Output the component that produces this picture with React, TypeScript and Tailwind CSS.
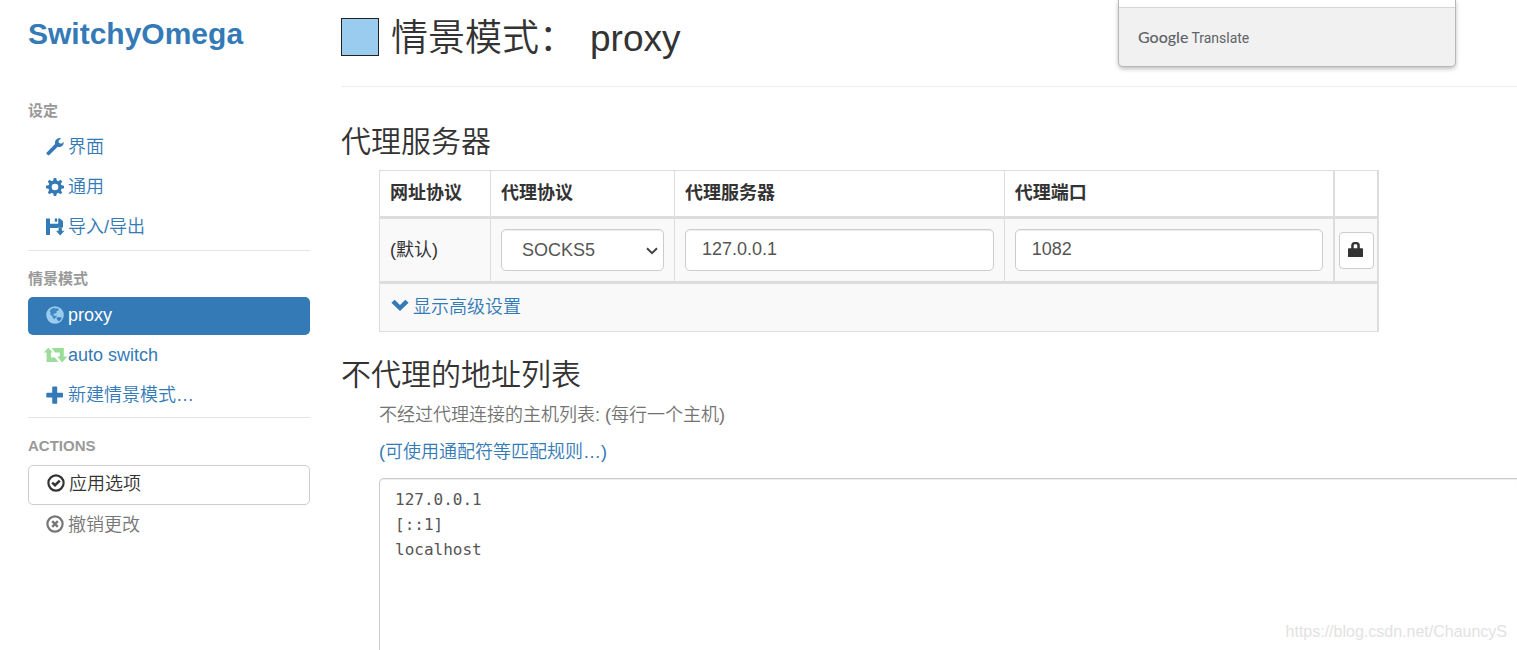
import * as React from "react"
import { cx } from "class-variance-authority"

type IconProps = { className?: string }

function WrenchIcon({ className }: IconProps) {
  return (
    <svg viewBox="0 0 18 18" className={className} fill="currentColor" aria-hidden="true">
      <path d="M15.200.6q-1.700-.9-3.700-.1Q8.900 1.700 8.900 4.700l.2 1.400L.7 14.400q-.7.800 0 1.600l1 1.100q.8.800 1.600 0l8.400-8.300q1.700.6 3.600-.3Q17.900 7.200 17.900 4.100l-2.700 1.700-2.400-1-.2-2.300z" />
    </svg>
  )
}

function CogIcon({ className }: IconProps) {
  return (
    <svg viewBox="0 0 18 18" className={className} aria-hidden="true">
      <circle cx="9" cy="9" r="5" fill="none" stroke="currentColor" strokeWidth="3.4" />
      {[0, 45, 90, 135].map((angle) => (
        <path
          key={angle}
          d="M7.800 0h2.400l.8 3.400H7zM7 14.600h4L10.200 18H7.800z"
          fill="currentColor"
          transform={`rotate(${angle} 9 9)`}
        />
      ))}
    </svg>
  )
}

function FloppyIcon({ className }: IconProps) {
  return (
    <svg viewBox="0 0 18 18" className={className} fill="currentColor" aria-hidden="true">
      <path d="M0 .5h4v5.300h8.200V.5H14l3 2.800v6.200h-5.200V10H4v7H0zM8.800.5h2.400v3.300H8.800z" />
      <path d="M12.600 9.200h3.200v3.600h2.600L14.200 17.600 10 12.800h2.600z" />
    </svg>
  )
}

function GlobeIcon({ className }: IconProps) {
  return (
    <svg viewBox="0 0 18 18" className={className} aria-hidden="true">
      <circle cx="9" cy="9" r="8.8" fill="#99ccee" />
      <path
        d="M5.200 3 8 1.800l1.400.8 1.800-.4 1.600 1-.6 1.600-1.700.1.3 1.500-1.300 1.200-1.800.2-.2 1.400 1.400.7 1.600-.1.300 1.200-1.600.7L8.400 13.300l-1.500-1.200-.6-2.100-2-1.500.2-2.200-.9-1z"
        fill="#337ab7"
        fillOpacity=".85"
      />
      <path d="M10.200 12.200l1.900-1 3.700.3c-.6 1.900-1.700 3.200-3.200 3.900l-1-1.700z" fill="#337ab7" />
    </svg>
  )
}

function RetweetIcon({ className }: IconProps) {
  return (
    <svg viewBox="0 0 18 18" className={className} fill="currentColor" aria-hidden="true">
      <path d="M2.200 1.800 6.800 6.600H4.900v5H9l3.200 4.400H.6V6.600h-2.700z" />
      <path d="M5.800 2h12v8.600h3.700L16 16.400l-4.700-5.800h2.500V6.400H9z" />
    </svg>
  )
}

function PlusIcon({ className }: IconProps) {
  return (
    <svg viewBox="0 0 18 18" className={className} fill="currentColor" aria-hidden="true">
      <path d="M7 .5h3.400q.8 0 .8.8v5.500h5q.8 0 .8.8v3.200q0 .8-.8.8h-5V17q0 .8-.8.8H7q-.8 0-.8-.8v-5.400H1.100q-.8 0-.8-.8V7.600q0-.8.8-.8h5.100V1.300q0-.8.8-.8z" />
    </svg>
  )
}

function OkCircleIcon({ className }: IconProps) {
  return (
    <svg viewBox="0 0 18 18" className={className} fill="none" stroke="currentColor" aria-hidden="true">
      <circle cx="9" cy="9" r="7.600" strokeWidth="2.200" />
      <path d="M5.200 8.600l2.800 2.600 4.800-4.600" strokeWidth="2.600" />
    </svg>
  )
}

function RemoveCircleIcon({ className }: IconProps) {
  return (
    <svg viewBox="0 0 18 18" className={className} fill="none" stroke="currentColor" aria-hidden="true">
      <circle cx="9" cy="9" r="7.600" strokeWidth="2.200" />
      <path d="M6.200 6.200l5.600 5.600M11.800 6.200l-5.600 5.600" strokeWidth="2.400" />
    </svg>
  )
}

function ChevronIcon({ className }: IconProps) {
  return (
    <svg viewBox="0 0 18 18" className={className} fill="currentColor" aria-hidden="true">
      <path d="M.4 5.800 3.600 2.700 9 8l5.400-5.300 3.200 3.100L9 14z" />
    </svg>
  )
}

function LockIcon({ className }: IconProps) {
  return (
    <svg viewBox="0 0 18 18" className={className} fill="currentColor" aria-hidden="true">
      <path d="M1.800 7.200h2.400V4.500Q4.200 1 7.700 1h1.600q3.500 0 3.500 3.500v2.700h2.400q.8 0 .8.8v7.400q0 .6-.8.6H1.800q-.8 0-.8-.6V8q0-.8.800-.8zM6.700 7.200h3.600V4.600Q10.300 3.300 9 3.300H8Q6.700 3.300 6.700 4.600z" />
    </svg>
  )
}

type NavItem = {
  name: string
  href: string
  icon: React.ComponentType<IconProps>
  iconClass?: string
  active?: boolean
}

const settings: NavItem[] = [
  { name: "界面", href: "#/ui", icon: WrenchIcon },
  { name: "通用", href: "#/general", icon: CogIcon },
  { name: "导入/导出", href: "#/io", icon: FloppyIcon },
]

const profiles: NavItem[] = [
  { name: "proxy", href: "#/profile/proxy", icon: GlobeIcon, active: true },
  {
    name: "auto switch",
    href: "#/profile/auto",
    icon: RetweetIcon,
    iconClass: "text-[#99dd99]",
  },
  { name: "新建情景模式…", href: "#/new", icon: PlusIcon },
]

function NavHeading({ children }: { children: React.ReactNode }) {
  return (
    <h2 className="text-[15px] leading-[22px] font-bold text-[#999999] uppercase">
      {children}
    </h2>
  )
}

function NavList({ items }: { items: NavItem[] }) {
  return (
    <ul className="mt-[7px] flex flex-col gap-[2px]">
      {items.map((item) => (
        <li key={item.name}>
          <a
            href={item.href}
            className={cx(
              "flex h-[38px] items-center gap-1 rounded-[5px] px-[18px] pb-[2px]",
              item.active ? "bg-[#337ab7] text-white" : "text-[#337ab7]",
            )}
          >
            <item.icon className={cx("size-[18px] shrink-0 overflow-visible", item.iconClass)} />
            {item.name}
          </a>
        </li>
      ))}
    </ul>
  )
}

function Sidebar() {
  return (
    <header className="w-[310px] shrink-0 pt-3 pl-7">
      <h1 className="text-[30px] leading-[44px] font-bold">
        <a href="#/about" className="text-[#337ab7]">
          SwitchyOmega
        </a>
      </h1>
      <nav className="mt-11 font-[350]">
        <NavHeading>设定</NavHeading>
        <NavList items={settings} />
        <hr className="mt-[3px] mb-[17px] border-[#e5e5e5]" />
        <NavHeading>情景模式</NavHeading>
        <NavList items={profiles} />
        <hr className="mt-[2px] mb-[17px] border-[#e5e5e5]" />
        <NavHeading>Actions</NavHeading>
        <div className="mt-2 flex flex-col gap-[1px]">
          <button
            type="button"
            className="flex h-10 items-center gap-1 rounded-[5px] border border-[#cccccc] bg-white px-[18px] pb-[2px] text-[#333333]"
          >
            <OkCircleIcon className="mb-[2px] size-[18px] shrink-0" />
            应用选项
          </button>
          <button
            type="button"
            className="flex h-[38px] items-center gap-1 px-[18px] text-[#777777]"
          >
            <RemoveCircleIcon className="mb-[2px] size-[18px] shrink-0" />
            撤销更改
          </button>
        </div>
      </nav>
    </header>
  )
}

const field =
  "block h-[42px] w-full rounded-[5px] border border-[#cccccc] bg-white text-[#555555] shadow-[inset_0_1px_1px_rgba(0,0,0,0.075)] outline-none"
const cell = "border border-[#dddddd] px-[10px] text-left"

function ServerTable() {
  return (
    <table className="w-full max-w-[1000px] table-fixed border-collapse">
      <colgroup>
        <col className="w-[111px]" />
        <col className="w-[184px]" />
        <col />
        <col />
        <col className="w-11" />
      </colgroup>
      <thead>
        <tr className="h-[47px] font-bold">
          <th className={cell}>网址协议</th>
          <th className={cell}>代理协议</th>
          <th className={cell}>代理服务器</th>
          <th className={cell}>代理端口</th>
          <td className="border border-x-2 border-[#dddddd]" />
        </tr>
      </thead>
      <tbody className="border-y-[3px] border-[#dddddd] bg-[#f9f9f9]">
        <tr className="h-[65px]">
          <td className={cell}>(默认)</td>
          <td className={cell}>
            <div className="relative">
              <select
                aria-label="代理协议"
                defaultValue="SOCKS5"
                className={cx(field, "appearance-none pl-5")}
              >
                <option>HTTP</option>
                <option>HTTPS</option>
                <option>SOCKS4</option>
                <option>SOCKS5</option>
              </select>
              <svg
                viewBox="0 0 12 8"
                className="pointer-events-none absolute top-[18px] right-[6px] h-2 w-3"
                fill="none"
                stroke="#444444"
                strokeWidth="2"
                aria-hidden="true"
              >
                <path d="M1 1.200l5 5 5-5" />
              </svg>
            </div>
          </td>
          <td className={cell}>
            <input
              type="text"
              aria-label="代理服务器"
              defaultValue="127.0.0.1"
              className={cx(field, "px-4 pb-[2px]")}
            />
          </td>
          <td className={cell}>
            <input
              type="text"
              aria-label="代理端口"
              defaultValue="1082"
              className={cx(field, "px-4 pb-[2px]")}
            />
          </td>
          <td className="border-x-2 border-[#dddddd]">
            <button
              type="button"
              aria-label="代理登录"
              className="mx-auto flex h-[37px] w-[35px] items-center justify-center rounded-[4px] border border-[#cccccc] bg-white text-[#333333]"
            >
              <LockIcon className="size-[18px]" />
            </button>
          </td>
        </tr>
      </tbody>
      <tbody className="bg-[#f9f9f9]">
        <tr className="h-[49px]">
          <td colSpan={5} className="border border-r-2 border-[#dddddd] px-[11px]">
            <a href="#advanced" className="flex items-center gap-1 font-[350] text-[#337ab7]">
              <ChevronIcon className="mb-1 size-[18px]" />
              显示高级设置
            </a>
          </td>
        </tr>
      </tbody>
    </table>
  )
}

function TranslatePopup() {
  return (
    <aside className="absolute top-0 right-[61px] w-[338px] rounded-b-[5px] border border-t-0 border-[#b8b8b8] bg-[#f1f1f1] text-[#5f6368] shadow-[0_2px_4px_rgba(0,0,0,0.25)]">
      <div className="h-2 border-b border-[#d4d4d4] bg-white" />
      <p className="flex h-[58px] items-center px-[19px]">
        <span className="flex items-baseline gap-[3px] leading-5">
          <span className="font-['Lato'] text-[16px] font-medium">Google</span>
          <span className="font-['Roboto'] text-[14px]">Translate</span>
        </span>
      </p>
    </aside>
  )
}

export default function App() {
  return (
    <div className="relative flex h-screen overflow-hidden bg-white font-['Liberation_Sans','Noto_Sans_CJK_SC',sans-serif] text-[18px] leading-[25px] text-[#333333]">
      <Sidebar />
      <main className="flex min-w-0 flex-1 flex-col pl-[31px]">
        <div className="flex h-[87px] shrink-0 items-start gap-3 border-b border-[#eeeeee] pt-[18px]">
          <span className="size-[38px] border border-[#222222] bg-[#99ccee]" />
          <h2 className="text-[37px] leading-[42px] font-[350]">
            情景模式：<span className="ml-[14px]">proxy</span>
          </h2>
        </div>
        <section className="mt-9">
          <h3 className="text-[30px] leading-[38px] font-[350]">代理服务器</h3>
          <div className="mt-[9px] pl-[38px]">
            <ServerTable />
          </div>
        </section>
        <section className="mt-6 flex min-h-0 flex-1 flex-col">
          <h3 className="text-[30px] leading-[38px] font-[350]">不代理的地址列表</h3>
          <div className="mt-[9px] flex flex-1 flex-col pl-[38px]">
            <p className="font-[350] text-[#737373]">
              <label htmlFor="bypass">不经过代理连接的主机列表: (每行一个主机)</label>
            </p>
            <p className="mt-3">
              <a href="#pattern" className="font-[350] text-[#337ab7]">
                (可使用通配符等匹配规则…)
              </a>
            </p>
            <textarea
              id="bypass"
              spellCheck={false}
              defaultValue={"127.0.0.1\n[::1]\nlocalhost"}
              className="mt-[13px] w-full flex-1 resize-none rounded-tl-[5px] border border-r-0 border-b-0 border-[#cccccc] bg-white px-[15px] py-2 font-['DejaVu_Sans_Mono',monospace] text-[16px] leading-[25px] text-[#555555] shadow-[inset_0_1px_1px_rgba(0,0,0,0.075)] outline-none"
            />
          </div>
        </section>
      </main>
      <TranslatePopup />
      <p className="absolute right-[10px] bottom-[6px] text-[16px] text-[#e2e2e2]">
        https://blog.csdn.net/ChauncyS
      </p>
    </div>
  )
}
